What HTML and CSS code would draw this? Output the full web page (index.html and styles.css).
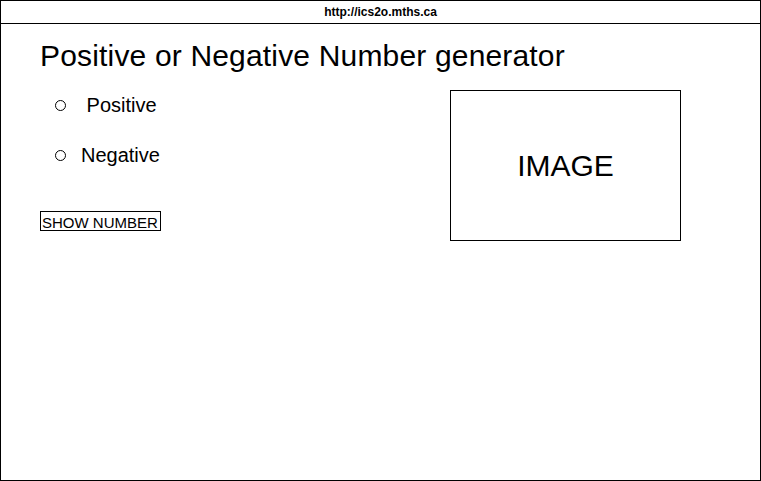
FILE: index.html
```html
<!DOCTYPE html>
<html>
<head>
<meta charset="utf-8">
<link rel="stylesheet" href="styles.css">
</head>
<body>
<div class="frame">
  <div class="urlbar">http://ics2o.mths.ca</div>
  <div class="content">
    <h1 class="title">Positive or Negative Number generator</h1>
    <div class="row">
      <div class="left">
        <label class="radio"><span class="dot"></span><span class="lbl">&nbsp;Positive</span></label>
        <label class="radio"><span class="dot"></span><span class="lbl">Negative</span></label>
        <button class="btn">SHOW NUMBER</button>
      </div>
      <div class="image">IMAGE</div>
    </div>
  </div>
</div>
</body>
</html>
```
FILE: styles.css
```css
html, body {
  margin: 0;
  padding: 0;
  background: #fff;
}
body {
  font-family: "Liberation Sans", Arial, sans-serif;
  color: #000;
}
.frame {
  box-sizing: border-box;
  width: 761px;
  height: 481px;
  border: 1px solid #000;
  overflow: hidden;
}
.urlbar {
  box-sizing: border-box;
  height: 23px;
  border-bottom: 1px solid #000;
  font-size: 12px;
  font-weight: bold;
  line-height: 22px;
  text-align: center;
}
.content {
  padding-left: 39px;
}
.title {
  margin: 17px 0 0 0;
  font-size: 30px;
  font-weight: normal;
  line-height: 30px;
  letter-spacing: 0.17px;
}
.row {
  display: grid;
  grid-template-columns: 410px 231px;
  margin-top: 19px;
}
.left {
  display: flex;
  flex-direction: column;
  align-items: flex-start;
  padding-top: 5px;
}
.radio {
  display: flex;
  align-items: center;
  height: 20px;
  margin-left: 15px;
  font-size: 20px;
  line-height: 20px;
}
.radio + .radio {
  margin-top: 30px;
}
.dot {
  box-sizing: border-box;
  width: 11px;
  height: 11px;
  border: 1px solid #000;
  border-radius: 50%;
  margin-right: 15px;
  margin-top: 1px;
}
.btn {
  display: block;
  box-sizing: border-box;
  width: 121px;
  height: 20px;
  margin: 46px 0 0 0;
  padding: 3px 0 0 1px;
  border: 1px solid #000;
  border-radius: 0;
  background: #fff;
  color: #000;
  font-family: "Liberation Sans", Arial, sans-serif;
  font-size: 15px;
  line-height: 15px;
  text-align: left;
  white-space: nowrap;
}
.image {
  box-sizing: border-box;
  width: 231px;
  height: 151px;
  border: 1px solid #000;
  display: flex;
  align-items: center;
  justify-content: center;
  font-size: 30px;
}
```
